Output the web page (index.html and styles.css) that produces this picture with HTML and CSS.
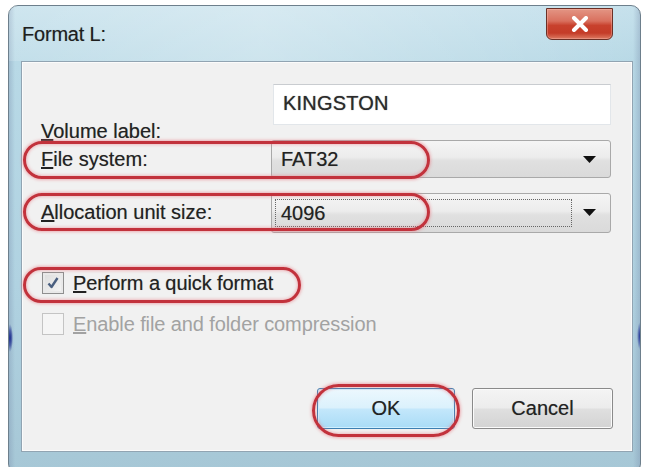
FILE: index.html
```html
<!DOCTYPE html>
<html>
<head>
<meta charset="utf-8">
<title>Format L:</title>
<link rel="stylesheet" href="styles.css">
</head>
<body>
<div class="window">
  <div class="titlebar">
    <span class="title">Format L:</span>
    <div class="close">
      <svg width="18" height="16" viewBox="0 0 18 16"><path d="M3 2 L15 14 M15 2 L3 14" stroke="#fff" stroke-width="4" stroke-linecap="round" fill="none"/></svg>
    </div>
  </div>
  <div class="panel">
    <div class="form">
      <label class="lbl lbl-vol"><u>V</u>olume label:</label>
      <div class="textbox">KINGSTON</div>
      <label class="lbl"><u>F</u>ile system:</label>
      <div class="combo"><span class="combo-val">FAT32</span><svg class="arrow" width="13" height="7" viewBox="0 0 13 7"><path d="M0 0 H13 L6.5 7 Z" fill="#111"/></svg></div>
      <label class="lbl"><u>A</u>llocation unit size:</label>
      <div class="combo combo-focus"><span class="combo-val focus">4096</span><svg class="arrow" width="13" height="7" viewBox="0 0 13 7"><path d="M0 0 H13 L6.5 7 Z" fill="#111"/></svg></div>
    </div>
    <div class="checks">
      <div class="check">
        <span class="box checked"><svg width="16" height="16" viewBox="0 0 16 16"><path d="M3.5 8.5 L6.5 12 L12.5 3" stroke="#4a5f80" stroke-width="2.4" fill="none" stroke-linejoin="round"/></svg></span>
        <span class="check-text"><u>P</u>erform a quick format</span>
      </div>
      <div class="check disabled">
        <span class="box"></span>
        <span class="check-text"><u>E</u>nable file and folder compression</span>
      </div>
    </div>
    <div class="buttons">
      <div class="btn btn-ok">OK</div>
      <div class="btn btn-cancel">Cancel</div>
    </div>
    <div class="mark mark-fs"></div>
    <div class="mark mark-alloc"></div>
    <div class="mark mark-quick"></div>
    <div class="mark mark-ok"></div>
  </div>
</div>
</body>
</html>
```

FILE: styles.css
```css
* { box-sizing: border-box; }
html, body { margin: 0; padding: 0; background: #fff; }
body {
  font-family: "Liberation Sans", Arial, sans-serif;
  font-size: 20px;
  color: #222;
  text-shadow: 0 0 0.7px rgba(0,0,0,0.35);
}
.window {
  margin: 5px 0 0 8px;
  width: 633px;
  height: 468px;
  border: 1px solid #6d7f8c;
  border-radius: 10px 10px 9px 9px;
  background:
    radial-gradient(ellipse 3px 14px at 1px 332px, #18288c 0%, rgba(24,40,140,0.6) 55%, rgba(24,40,140,0) 100%),
    radial-gradient(ellipse 3px 14px at 631px 330px, #1d2f96 0%, rgba(29,47,150,0.5) 55%, rgba(29,47,150,0) 100%),
    linear-gradient(90deg, rgba(120,140,170,0.35) 0px, rgba(120,140,170,0) 6px, rgba(0,0,0,0) 624px, rgba(120,140,170,0.35) 631px),
    linear-gradient(180deg, #c6e1ec 0%, #b8d9e6 12%, #b0d2e1 60%, #a6c7d6 100%);
  display: flex;
  flex-direction: column;
}
.titlebar {
  height: 55px;
  display: flex;
  align-items: flex-start;
  padding-left: 13px;
  background: linear-gradient(90deg, rgba(255,255,255,0.15) 0%, rgba(255,255,255,0.3) 40%, rgba(255,255,255,0.1) 80%, rgba(255,255,255,0) 100%);
}
.title {
  margin-top: 17px;
  font-size: 20px;
  color: #1e1e1e;
  letter-spacing: -0.2px;
}
.close {
  margin-left: auto;
  margin-top: 2px;
  margin-right: 27px;
  width: 67px;
  height: 32px;
  border: 1px solid #6b3026;
  border-radius: 0 0 6px 6px;
  background: linear-gradient(180deg, #e39584 0%, #d9705e 40%, #c8412d 55%, #c43c28 80%, #dd7a62 100%);
  box-shadow: inset 0 0 0 1px rgba(255,200,190,0.35);
  display: flex;
  align-items: center;
  justify-content: center;
}
.panel {
  position: relative;
  margin: 0 7px 0 12px;
  height: 391px;
  border: 1px solid #91a4b2;
  background: #f1f1f1;
  box-shadow: inset 0 0 0 1px #fbfbfb;
  padding: 22px 19px 0 18px;
  display: flex;
  flex-direction: column;
}
.form {
  display: grid;
  grid-template-columns: 233px 338px;
  grid-template-rows: 41px 38px 39px;
  row-gap: 15px;
  align-items: center;
}
.lbl { padding-left: 1px; }
.lbl-vol { align-self: start; padding-top: 36px; }
.textbox {
  height: 41px;
  background: #fff;
  border: 1px solid #e2e6ea;
  border-top-color: #c9ccd0;
  padding: 8px 9px;
  line-height: 20px;
  color: #2a2a2a;
  text-shadow: 0 0 1px rgba(0,0,0,0.6);
  letter-spacing: 0.2px;
}
.combo {
  height: 38px;
  margin-left: -2px;
  border: 1px solid #a9a9a9;
  border-radius: 3px;
  background: linear-gradient(180deg, #f5f5f5 0%, #ececec 45%, #e0e0e0 55%, #dadada 100%);
  display: flex;
  align-items: center;
  padding: 0 14px 0 9px;
}
.combo-focus { height: 40px; }
.combo-val { flex: 1; }
.combo-val.focus {
  flex: 0 0 297px;
  height: 28px;
  margin-left: -6px;
  padding-left: 5px;
  line-height: 26px;
  border: 1px dotted #666;
}
.arrow { margin-left: auto; }
.checks {
  margin-top: 40px;
  display: flex;
  flex-direction: column;
  gap: 19px;
}
.check {
  display: flex;
  align-items: center;
  gap: 9px;
  height: 22px;
  padding-left: 2px;
}
.box {
  width: 22px;
  height: 22px;
  border: 1px solid #8f8f8f;
  background: linear-gradient(135deg, #dcdcdc, #f6f6f6);
  box-shadow: inset 0 0 0 2px #e9e9e9;
  display: flex;
  align-items: center;
  justify-content: center;
}
.check-text { letter-spacing: -0.1px; }
.disabled .box { border-color: #c4c4c4; background: #f5f5f5; box-shadow: none; }
.disabled .check-text { color: #a2a2a2; text-shadow: none; }
.buttons {
  margin-top: 53px;
  display: flex;
  justify-content: flex-end;
  gap: 17px;
}
.btn {
  width: 138px;
  height: 41px;
  border-radius: 3px;
  display: flex;
  align-items: center;
  justify-content: center;
  color: #222;
}
.btn-ok {
  border: 1px solid #3c7fb1;
  background: linear-gradient(180deg, #ecf8fe 0%, #dbf1fc 48%, #c3e7fb 52%, #a9dcf6 100%);
  box-shadow: inset 0 0 0 1px #cff0ff;
}
.btn-cancel {
  width: 141px;
  border: 1px solid #8a8a8a;
  background: linear-gradient(180deg, #f4f4f4 0%, #ececec 48%, #dfdfdf 52%, #d3d3d3 100%);
  box-shadow: inset 0 0 0 1px #fbfbfb;
}
.mark {
  position: absolute;
  border: 3px solid #c2323c;
  border-radius: 999px;
  box-shadow: 0 0 3px 1px rgba(235, 120, 130, 0.55), inset 0 0 3px 1px rgba(235, 120, 130, 0.45);
}
.mark-fs { left: 1px; top: 79px; width: 407px; height: 38px; }
.mark-alloc { left: 1px; top: 131px; width: 407px; height: 38px; }
.mark-quick { left: 1px; top: 205px; width: 278px; height: 36px; }
.mark-ok { left: 290px; top: 322px; width: 148px; height: 53px; }
```
